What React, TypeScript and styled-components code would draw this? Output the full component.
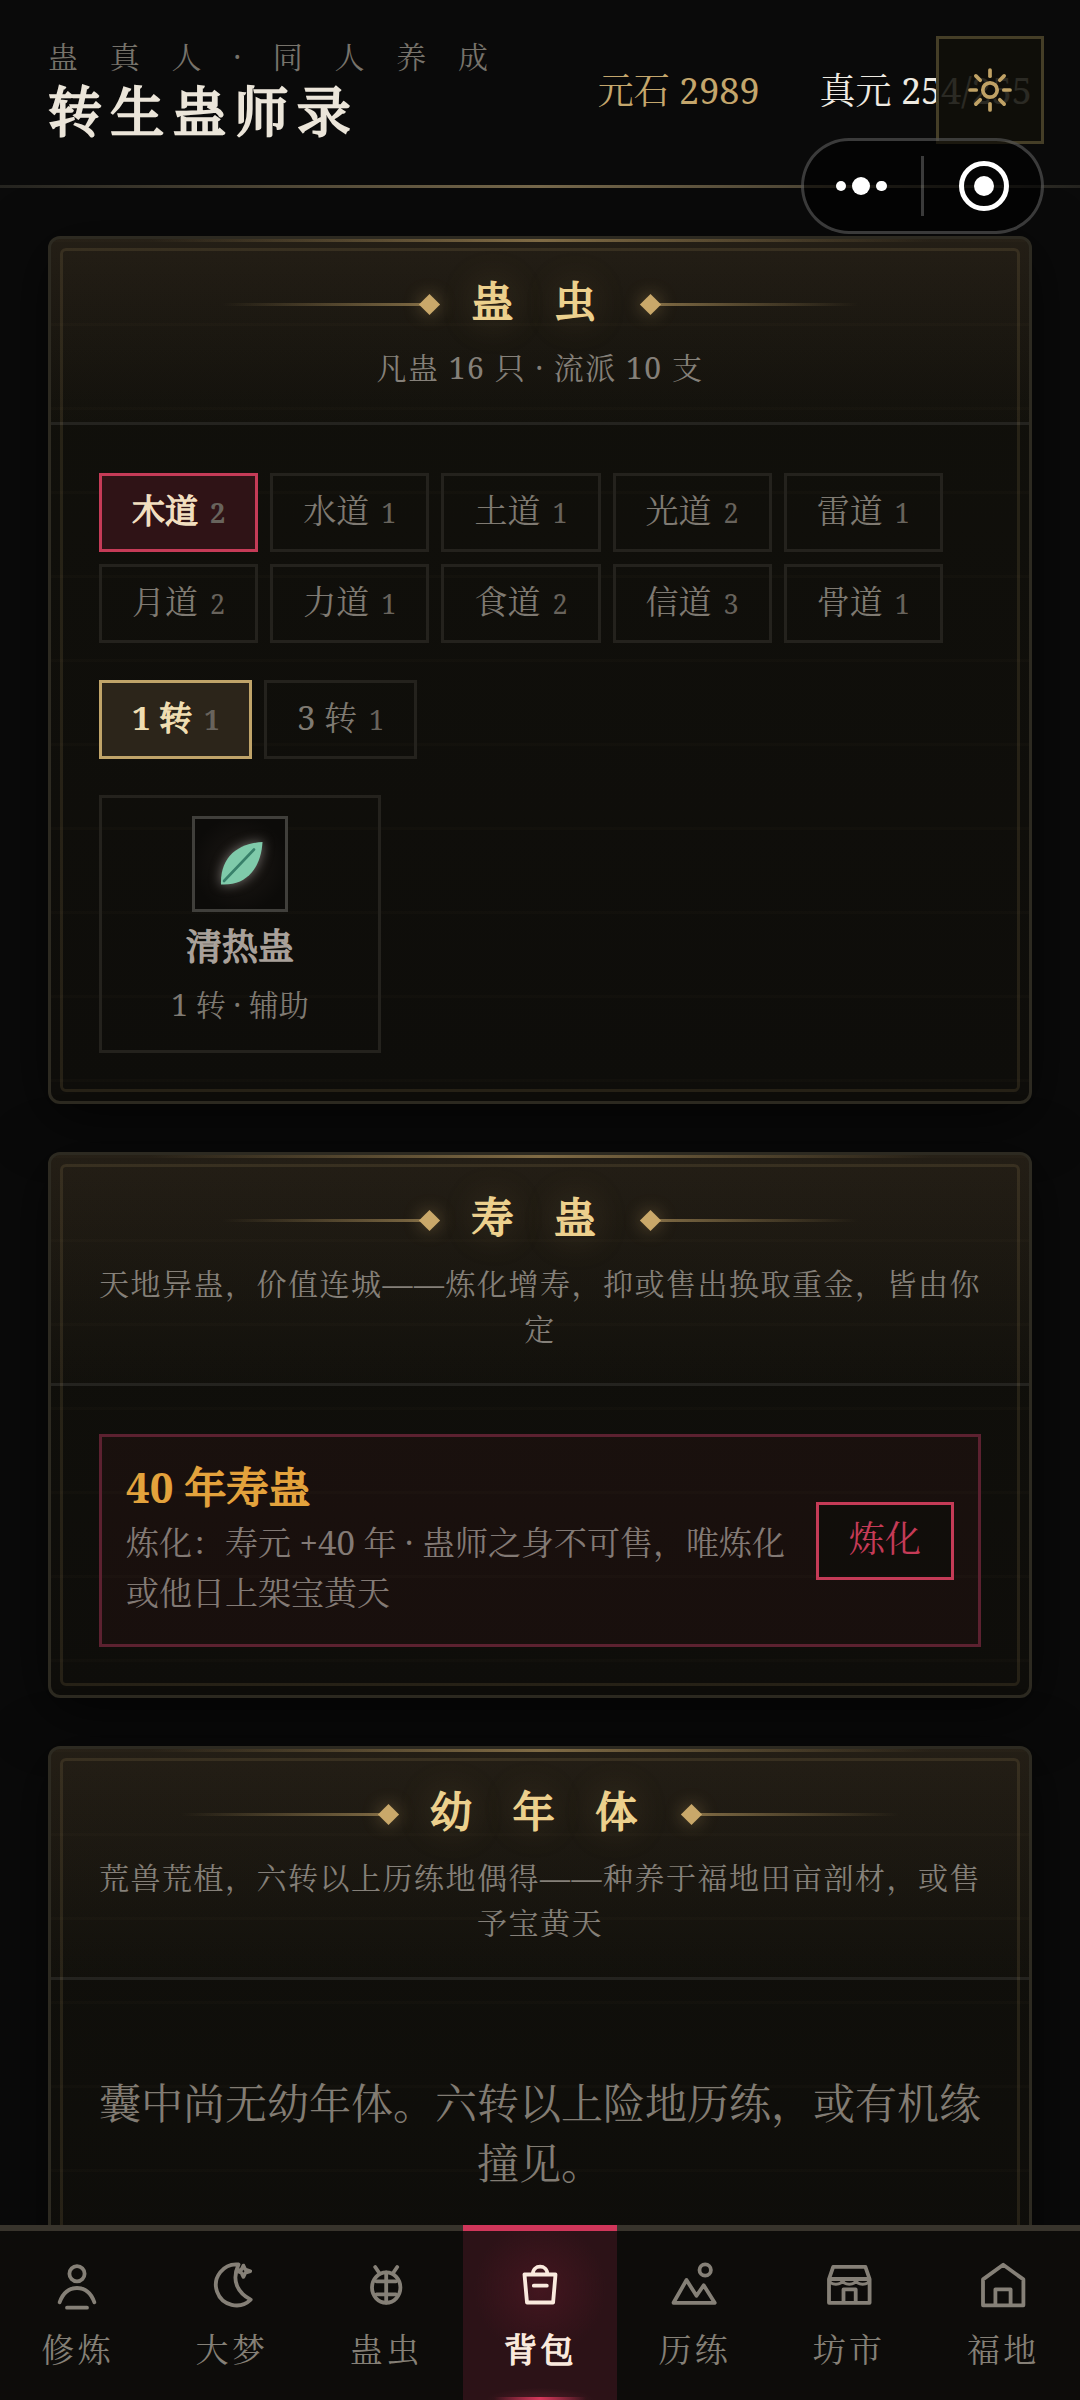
import React from 'react';
import styled, { createGlobalStyle, css } from 'styled-components';

const GlobalStyle = createGlobalStyle`
  * { box-sizing: border-box; }
  body {
    margin: 0;
    background: #0a0a0a;
    font-family: 'Noto Serif', 'DejaVu Serif Condensed', 'Noto Serif CJK SC', 'Noto Sans CJK SC', serif;
    color: #ebe5d9;
  }
`;

/* Low-contrast bold: regular Song strokes thickened evenly. */
const thick = css`
  font-weight: 400;
  -webkit-text-stroke: 0.042em currentColor;
`;

const Screen = styled.div`
  position: relative;
  display: flex;
  flex-direction: column;
  width: 1080px;
  height: 2400px;
  overflow: hidden;
  background: #0a0a0a;
`;

const TopBar = styled.header`
  display: flex;
  justify-content: space-between;
  height: 188px;
  flex: none;
  padding: 36px 48px 0 48px;
  border-bottom: 3px solid;
  border-image: linear-gradient(90deg, #24231f 0%, #75674a 50%, #24231f 100%) 1;
`;

const Brand = styled.div`
  display: flex;
  flex-direction: column;
`;

const Eyebrow = styled.div`
  height: 41px;
  font-size: 30px;
  line-height: 41px;
  letter-spacing: 31.8px;
  white-space: nowrap;
  color: #77736b;
`;

const AppTitle = styled.h1`
  margin: 0;
  font-size: 54px;
  line-height: 69px;
  letter-spacing: 8.2px;
  white-space: nowrap;
  color: #ebe5d9;
  ${thick}
`;

const Stats = styled.div`
  display: flex;
  gap: 60px;
  height: 110px;
  align-items: center;
  font-size: 36px;
  line-height: 54px;
  white-space: nowrap;
`;

const Stat = styled.span<{ $gold?: boolean }>`
  color: ${p => (p.$gold ? '#c4a66c' : '#efebe2')};
`;

const ThemeButton = styled.button`
  position: absolute;
  top: 36px;
  right: 36px;
  width: 108px;
  height: 108px;
  display: flex;
  align-items: center;
  justify-content: center;
  padding: 0;
  border: 3px solid #453e27;
  background: rgba(16, 15, 9, 0.88);
`;

const Capsule = styled.div`
  position: absolute;
  top: 138px;
  right: 36px;
  width: 243px;
  height: 96px;
  display: flex;
  align-items: center;
  border: 3px solid rgba(255, 255, 255, 0.22);
  border-radius: 48px;
  background: rgba(0, 0, 0, 0.6);
`;

const CapsuleHalf = styled.div`
  flex: 1;
  display: flex;
  align-items: center;
  justify-content: center;
  gap: 6px;
  &:first-child { padding-right: 3px; }
  &:last-child { padding-left: 3px; }
`;

const CapsuleDivider = styled.div`
  width: 3px;
  height: 60px;
  background: rgba(255, 255, 255, 0.22);
`;

const Dot = styled.span<{ $size: number }>`
  width: ${p => p.$size}px;
  height: ${p => p.$size}px;
  border-radius: 50%;
  background: #fff;
`;

const Ring = styled.span`
  display: flex;
  align-items: center;
  justify-content: center;
  width: 50px;
  height: 50px;
  border: 5px solid #fff;
  border-radius: 50%;
`;

const Content = styled.main`
  flex: 1;
  min-height: 0;
  display: flex;
  flex-direction: column;
  gap: 48px;
  padding: 48px 48px 0;
  overflow: hidden;
`;

const PanelBox = styled.section`
  position: relative;
  flex: none;
  border: 3px solid #2d2a21;
  border-radius: 12px;
  background:
    repeating-linear-gradient(180deg, rgba(201, 168, 106, 0.02) 0 3px, transparent 3px 84px),
    linear-gradient(180deg, #11100b, #0e0d0a);
  box-shadow: 0 12px 60px rgba(0, 0, 0, 0.6);

  &::before {
    content: '';
    position: absolute;
    top: 0;
    left: 0;
    right: 0;
    height: 3px;
    background: linear-gradient(90deg, transparent 10%, rgba(201, 168, 106, 0.55) 50%, transparent 90%);
  }

  &::after {
    content: '';
    position: absolute;
    inset: 9px;
    border: 3px solid rgba(201, 168, 106, 0.13);
    border-radius: 6px;
    pointer-events: none;
  }
`;

const PanelHead = styled.div`
  padding: 32px 48px 32px;
  border-bottom: 3px solid #24231f;
  border-radius: 9px 9px 0 0;
  background: linear-gradient(180deg, rgba(201, 155, 115, 0.1), rgba(201, 168, 106, 0.01));
`;

const TitleRow = styled.div`
  display: flex;
  align-items: center;
  justify-content: center;
  height: 59px;
`;

const Rule = styled.span<{ $side: 'left' | 'right' }>`
  width: 208px;
  height: 3px;
  margin-top: 7px;
  background: linear-gradient(${p => (p.$side === 'left' ? '90deg' : '270deg')}, transparent 4%, rgba(201, 168, 106, 0.55));
`;

const Diamond = styled.span<{ $side: 'left' | 'right' }>`
  width: 15px;
  height: 15px;
  margin: ${p => (p.$side === 'left' ? '8px 6px 0 0' : '8px 0 0 6px')};
  transform: rotate(45deg);
  background: #c9a86a;
  box-shadow: 0 0 18px rgba(201, 168, 106, 0.45);
`;

const PanelTitle = styled.h2`
  margin: 0;
  padding-left: 28px;
  font-size: 42px;
  line-height: 59px;
  letter-spacing: 40.6px;
  white-space: nowrap;
  color: #ecd08d;
  text-shadow: 0 0 36px rgba(201, 168, 106, 0.4);
  ${thick}
`;

const Subtitle = styled.p`
  margin: 15px 0 0;
  font-size: 30px;
  line-height: 45px;
  letter-spacing: 1.5px;
  text-align: center;
  color: #858079;
`;

const PanelBody = styled.div`
  padding: 48px;
`;

const ChipRow = styled.div<{ $last?: boolean }>`
  display: flex;
  flex-wrap: wrap;
  gap: 12px;
  margin-bottom: ${p => (p.$last ? 36 : 37)}px;
`;

const Chip = styled.button<{ $tone?: 'red' | 'gold'; $narrow?: boolean }>`
  display: flex;
  align-items: center;
  gap: 12px;
  width: ${p => (p.$narrow ? 153 : 159.2)}px;
  height: 79px;
  padding: 0 0 3px 30px;
  border: 3px solid #24221d;
  background: transparent;
  font: inherit;
  font-size: 33px;
  line-height: 50px;
  white-space: nowrap;
  color: #7f7a72;
  ${p => p.$tone === 'red' && css`
    border-color: #c53b57;
    background: #2f1316;
    color: #f2dfc0;
  `}
  ${p => p.$tone === 'gold' && css`
    border-color: #c0a469;
    background: #2c251a;
    color: #f0deb2;
  `}
`;

const ChipName = styled.span<{ $on?: boolean }>`
  ${p => p.$on && thick}
`;

const Count = styled.span<{ $on?: boolean }>`
  padding-top: 4px;
  font-size: 27px;
  font-weight: ${p => (p.$on ? 700 : 400)};
  color: #68635c;
`;

const GuCard = styled.div`
  display: flex;
  flex-direction: column;
  align-items: center;
  width: 282px;
  height: 258px;
  padding-top: 18px;
  border: 3px solid #24221d;
`;

const GuIcon = styled.div`
  display: flex;
  align-items: center;
  justify-content: center;
  width: 96px;
  height: 96px;
  flex: none;
  border: 3px solid #403f3b;
  background: radial-gradient(circle, #1c1815 0%, #0c0b09 75%);
  svg { filter: drop-shadow(0 0 6px rgba(215, 210, 205, 0.5)); }
`;

const GuName = styled.div`
  margin-top: 8px;
  font-size: 36px;
  line-height: 54px;
  color: #a9a19a;
  ${thick}
`;

const GuMeta = styled.div`
  margin-top: 8px;
  font-size: 30px;
  line-height: 45px;
  color: #7f7a72;
`;

const LifeItem = styled.div`
  display: flex;
  align-items: center;
  gap: 27px;
  height: 213px;
  padding: 0 24px;
  border: 3px solid #5c2130;
  background: rgba(197, 50, 67, 0.055);
`;

const LifeText = styled.div`
  flex: 1;
  min-width: 0;
  padding-bottom: 6px;
`;

const LifeName = styled.div`
  margin-bottom: 3px;
  font-size: 42px;
  line-height: 57px;
  color: #e3a23c;
  ${thick}
`;

const Num = styled.span`
  font-weight: 700;
  -webkit-text-stroke: 0;
`;

const LifeDesc = styled.div`
  font-size: 33px;
  line-height: 50px;
  color: #837a75;
`;

const RefineButton = styled.button`
  width: 138px;
  height: 78px;
  flex: none;
  padding: 0 0 3px;
  border: 3px solid #c53b57;
  background: rgba(10, 12, 8, 0.5);
  font: inherit;
  font-size: 36px;
  line-height: 54px;
  color: #c53b57;
`;

const Empty = styled.p`
  margin: 0;
  padding: 45px 0 51px;
  font-size: 42px;
  line-height: 60px;
  text-align: center;
  color: #827c73;
`;

const NavBar = styled.nav`
  display: grid;
  grid-template-columns: repeat(7, 1fr);
  height: 175px;
  flex: none;
  background: #0d0c0a;
`;

const NavItem = styled.a<{ $active?: boolean }>`
  display: flex;
  flex-direction: column;
  align-items: center;
  padding-top: 28px;
  border-top: 6px solid #38342c;
  font-size: 33px;
  line-height: 50px;
  color: #858077;
  ${p => p.$active && css`
    border-top-color: #d0365a;
    background:
      linear-gradient(90deg, transparent, #d8385c 50%, transparent) 50% 100% / 92px 3px no-repeat,
      radial-gradient(ellipse 54px 12px at 50% 100%, rgba(197, 59, 87, 0.22), transparent),
      radial-gradient(circle 66px at 50% 34%, #43161f, transparent),
      #2c1217;
    color: #faeade;
    ${thick}
  `}
`;

const NavLabel = styled.span`
  margin-top: 12px;
  padding-left: 1px;
  letter-spacing: 3.4px;
`;

const iconProps = {
  width: 54,
  height: 54,
  viewBox: '0 0 54 54',
  fill: 'none',
  stroke: 'currentColor',
  strokeWidth: 3.8,
  strokeLinecap: 'round' as const,
  strokeLinejoin: 'round' as const,
};

const icons = {
  person: (
    <svg {...iconProps}>
      <circle cx="27" cy="14.7" r="7.6" />
      <path d="M9.6 43.3C13 34 19 29 27 29s14 5 17.4 14.3M17 48.7h20" />
    </svg>
  ),
  moon: (
    <svg {...iconProps}>
      <path d="M34.5 5.5A20.5 20.5 0 1 0 46.7 40.6C34 34 27 22 34.5 5.5Z" />
      <path strokeWidth="3.6" d="M39.4 6.5l1.9 4 5 1.7-5 1.7-1.9 4.1-1.9-4.1-4.2-1.7 4.2-1.7z" />
    </svg>
  ),
  bug: (
    <svg {...iconProps}>
      <ellipse cx="27.2" cy="28.6" rx="14.2" ry="15.2" />
      <path d="M27.2 13.5v30M17.5 22.3h19.5M17.5 35.3h19.5M16.2 8l3.4 5M38.2 8l-3.4 5" />
    </svg>
  ),
  bag: (
    <svg {...iconProps}>
      <path d="M11.5 15.5h31l-2.4 28H14z M19.8 15.5c0-10.4 14.6-10.4 14.6 0M20.8 26.7h13" />
    </svg>
  ),
  mountain: (
    <svg {...iconProps}>
      <path d="M6.5 43.8L19.5 21l10 15.8 7.2-10.5 11 17.5z" />
      <circle cx="38.2" cy="11" r="5.7" />
    </svg>
  ),
  store: (
    <svg {...iconProps}>
      <path d="M7 43.8V20l4.2-12.2h32.2L47.6 20v23.8zM7 20h40.6M21.5 43.8V30.4h12.2v13.4" />
      <path strokeWidth="3" d="M7.2 21c1 5.6 12.4 5.6 13.4 0 1 5.6 12.4 5.6 13.4 0 1 5.6 12.4 5.6 13.4 0" />
    </svg>
  ),
  house: (
    <svg {...iconProps}>
      <path d="M7 46.3V20.4L27.2 5.8l20.2 14.6v25.9zM19.4 46.3v-16h15.2v16" />
    </svg>
  ),
};

const SunIcon = () => (
  <svg width="48" height="48" viewBox="-24 -24 48 48" fill="none" stroke="#c0a265" strokeWidth="3.7" strokeLinecap="round">
    <circle r="7.2" />
    {[0, 45, 90, 135, 180, 225, 270, 315].map(a => (
      <path key={a} d="M0 -13.8V-20" transform={`rotate(${a})`} />
    ))}
  </svg>
);

const LeafIcon = () => (
  <svg width="54" height="54" viewBox="0 0 54 54" fill="none">
    <path d="M49.5 5C24 6.5 7 20.5 8 47.5C34 49 48 30.5 49.5 5Z" fill="#7fcaaa" />
    <path d="M11 44L41 12.5" stroke="#38806a" strokeWidth="2.6" strokeLinecap="round" />
  </svg>
);

type PanelProps = { title: string; subtitle: string; children: React.ReactNode };

const Panel = ({ title, subtitle, children }: PanelProps) => (
  <PanelBox>
    <PanelHead>
      <TitleRow>
        <Rule $side="left" />
        <Diamond $side="left" />
        <PanelTitle>{title}</PanelTitle>
        <Diamond $side="right" />
        <Rule $side="right" />
      </TitleRow>
      <Subtitle>{subtitle}</Subtitle>
    </PanelHead>
    <PanelBody>{children}</PanelBody>
  </PanelBox>
);

const schools: [string, number][] = [
  ['木道', 2], ['水道', 1], ['土道', 1], ['光道', 2], ['雷道', 1],
  ['月道', 2], ['力道', 1], ['食道', 2], ['信道', 3], ['骨道', 1],
];

const tabs: [string, keyof typeof icons][] = [
  ['修炼', 'person'], ['大梦', 'moon'], ['蛊虫', 'bug'], ['背包', 'bag'],
  ['历练', 'mountain'], ['坊市', 'store'], ['福地', 'house'],
];

export default function App() {
  return (
    <>
      <GlobalStyle />
      <Screen lang="zh-CN">
        <TopBar>
          <Brand>
            <Eyebrow>蛊真人·同人养成</Eyebrow>
            <AppTitle>转生蛊师录</AppTitle>
          </Brand>
          <Stats>
            <Stat $gold>元石 2989</Stat>
            <Stat>真元 254/255</Stat>
          </Stats>
        </TopBar>

        <Content>
          <Panel title="蛊虫" subtitle="凡蛊 16 只 · 流派 10 支">
            <ChipRow>
              {schools.map(([name, count], i) => (
                <Chip key={name} $tone={i === 0 ? 'red' : undefined}>
                  <ChipName $on={i === 0}>{name}</ChipName>
                  <Count $on={i === 0}>{count}</Count>
                </Chip>
              ))}
            </ChipRow>
            <ChipRow $last>
              <Chip $tone="gold" $narrow>
                <ChipName $on><Num>1</Num> 转</ChipName>
                <Count $on>1</Count>
              </Chip>
              <Chip $narrow>
                <ChipName>3 转</ChipName>
                <Count>1</Count>
              </Chip>
            </ChipRow>
            <GuCard>
              <GuIcon><LeafIcon /></GuIcon>
              <GuName>清热蛊</GuName>
              <GuMeta>1 转 · 辅助</GuMeta>
            </GuCard>
          </Panel>

          <Panel title="寿蛊" subtitle="天地异蛊，价值连城——炼化增寿，抑或售出换取重金，皆由你定">
            <LifeItem>
              <LifeText>
                <LifeName><Num>40</Num> 年寿蛊</LifeName>
                <LifeDesc>炼化：寿元 +40 年 · 蛊师之身不可售，唯炼化或他日上架宝黄天</LifeDesc>
              </LifeText>
              <RefineButton>炼化</RefineButton>
            </LifeItem>
          </Panel>

          <Panel title="幼年体" subtitle="荒兽荒植，六转以上历练地偶得——种养于福地田亩剖材，或售予宝黄天">
            <Empty>囊中尚无幼年体。六转以上险地历练，或有机缘撞见。</Empty>
          </Panel>
        </Content>

        <NavBar>
          {tabs.map(([label, icon]) => (
            <NavItem key={label} $active={icon === 'bag'}>
              {icons[icon]}
              <NavLabel>{label}</NavLabel>
            </NavItem>
          ))}
        </NavBar>

        <ThemeButton aria-label="theme"><SunIcon /></ThemeButton>
        <Capsule>
          <CapsuleHalf>
            <Dot $size={10.5} />
            <Dot $size={18} />
            <Dot $size={10.5} />
          </CapsuleHalf>
          <CapsuleDivider />
          <CapsuleHalf>
            <Ring><Dot $size={20} /></Ring>
          </CapsuleHalf>
        </Capsule>
      </Screen>
    </>
  );
}
